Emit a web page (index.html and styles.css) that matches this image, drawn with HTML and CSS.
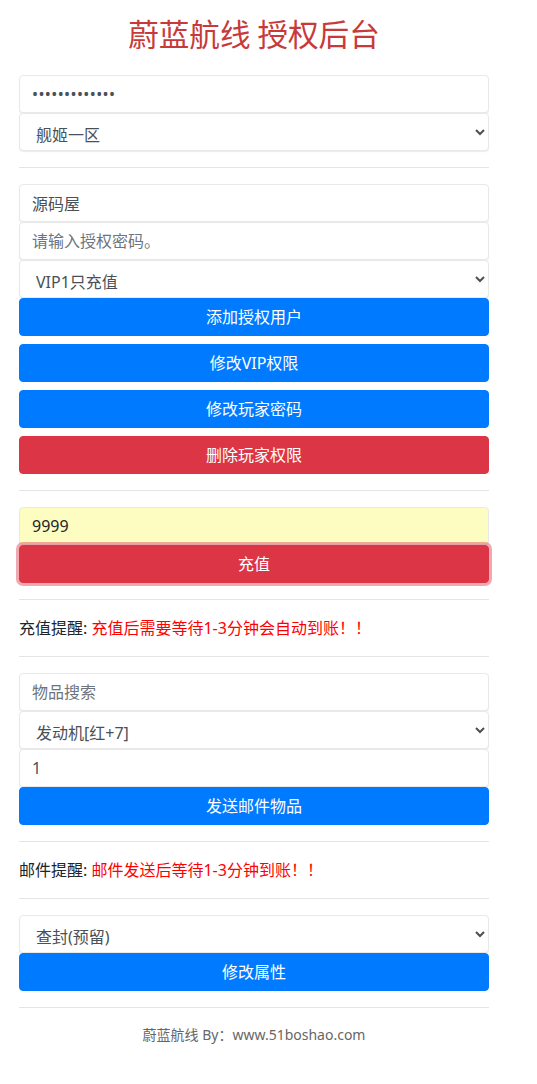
FILE: index.html
```html
<!DOCTYPE html>
<html lang="zh-CN">
<head>
<meta charset="utf-8">
<title>蔚蓝航线 授权后台</title>
<link rel="stylesheet" href="styles.css">
</head>
<body>
<div class="container">
  <h1 class="title">蔚蓝航线 授权后台</h1>

  <input class="field field-pass" type="password" value="1234567890123">
  <select class="field field-select">
    <option>舰姬一区</option>
  </select>
  <hr class="rule">

  <input class="field" type="text" value="源码屋">
  <input class="field" type="text" placeholder="请输入授权密码。">
  <select class="field field-select">
    <option>VIP1只充值</option>
  </select>
  <button class="btn btn-blue">添加授权用户</button>
  <button class="btn btn-blue">修改VIP权限</button>
  <button class="btn btn-blue">修改玩家密码</button>
  <button class="btn btn-red">删除玩家权限</button>
  <hr class="rule">

  <input class="field field-fill" type="text" value="9999">
  <button class="btn btn-red btn-focus">充值</button>
  <hr class="rule">

  <p class="notice">充值提醒: <span class="warn">充值后需要等待1-3分钟会自动到账！！</span></p>
  <hr class="rule">

  <input class="field" type="text" placeholder="物品搜索">
  <select class="field field-select">
    <option>发动机[红+7]</option>
  </select>
  <input class="field" type="text" value="1">
  <button class="btn btn-blue">发送邮件物品</button>
  <hr class="rule">

  <p class="notice">邮件提醒: <span class="warn">邮件发送后等待1-3分钟到账！！</span></p>
  <hr class="rule">

  <select class="field field-select">
    <option>查封(预留)</option>
  </select>
  <button class="btn btn-blue">修改属性</button>
  <hr class="rule">

  <p class="footer">蔚蓝航线 By：www.51boshao.com</p>
</div>
</body>
</html>
```

FILE: styles.css
```css
* {
  box-sizing: border-box;
}

html, body {
  margin: 0;
  padding: 0;
  background: #fff;
}

body {
  font-family: "Noto Sans", "Noto Sans CJK SC", sans-serif;
  font-size: 16px;
  line-height: 1.5;
  color: #212529;
}

.container {
  width: 470px;
  margin-left: 19px;
  display: flow-root;
}

.title {
  font-family: "Noto Sans CJK SC", sans-serif;
  font-size: 30.6px;
  font-weight: 400;
  line-height: 36px;
  color: #c83a3a;
  text-align: center;
  margin: 15px 0 24px;
}

.field {
  display: block;
  width: 100%;
  height: 38px;
  padding: 6px 12px;
  font-family: inherit;
  font-size: 16px;
  line-height: 1.5;
  color: #495057;
  background: #fff;
  border: 1px solid #e9e9e9;
  border-radius: 4px;
  box-shadow: 0 1px 1px rgba(0, 0, 0, 0.08);
  margin: 0;
}

.field-select {
  padding-top: 9px;
  padding-bottom: 3px;
}

.field-pass {
  letter-spacing: 0.4px;
}

.field::placeholder {
  color: #6c757d;
  opacity: 1;
}

.field-fill {
  background: #fdfdc1;
  color: #212529;
}

.rule {
  margin: 16px 0;
  border: 0;
  border-top: 1px solid rgba(0, 0, 0, 0.1);
  height: 0;
}

.btn {
  display: block;
  width: 100%;
  height: 38px;
  padding: 6px 12px;
  font-family: inherit;
  font-size: 16px;
  line-height: 1.5;
  color: #fff;
  border: 1px solid transparent;
  border-radius: 4px;
  text-align: center;
  margin: 0;
}

.btn + .btn {
  margin-top: 8px;
}

.btn-blue {
  background: #007bff;
  border-color: #007bff;
}

.btn-red {
  background: #dc3545;
  border-color: #dc3545;
}

.btn-focus {
  box-shadow: 0 0 0 3px rgba(225, 83, 97, 0.5);
}

.notice {
  margin: 16px 0;
  font-size: 16px;
  line-height: 24px;
}

.warn {
  color: #ff0000;
}

.footer {
  margin: 16px 0;
  font-size: 14px;
  line-height: 21px;
  text-align: center;
  color: #666;
}
```
